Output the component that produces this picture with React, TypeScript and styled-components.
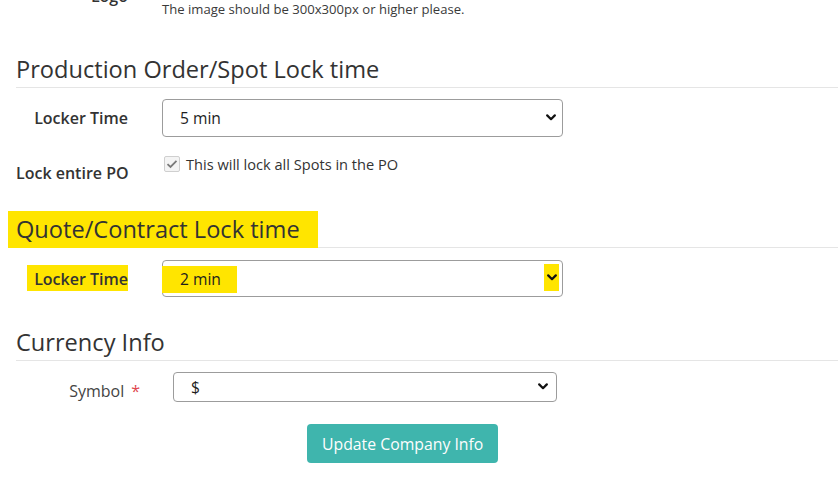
import React from "react";
import styled, { createGlobalStyle } from "styled-components";

const GlobalStyle = createGlobalStyle`
  html, body { margin: 0; padding: 0; background: #fff; }
  body { font-family: "Open Sans", "Liberation Sans", sans-serif; color: #333; overflow: hidden; }
`;

const Page = styled.div`
  padding-left: 16px;
`;

const FormRow = styled.div<{ $cols: string; $gap: number; $mt: number; $align?: string }>`
  display: grid;
  grid-template-columns: ${(p) => p.$cols};
  column-gap: ${(p) => p.$gap}px;
  margin-top: ${(p) => p.$mt}px;
  align-items: ${(p) => p.$align || "center"};
`;

const Label = styled.label<{ $mt?: number; $weight?: number; $color?: string }>`
  display: block;
  text-align: right;
  font-size: 16px;
  line-height: 22px;
  font-weight: ${(p) => p.$weight ?? 600};
  color: ${(p) => p.$color || "#333"};
  margin-top: ${(p) => p.$mt ?? 0}px;
  white-space: nowrap;
`;

const HelpText = styled.div`
  font-size: 13.1px;
  line-height: 18px;
  color: #3a3a3a;
`;

const SectionTitle = styled.h3<{ $mt: number }>`
  margin: ${(p) => p.$mt}px 0 0 0;
  font-size: 23.6px;
  font-weight: 400;
  line-height: 26px;
  color: #333;
  padding-bottom: 5px;
  border-bottom: 1px solid #e5e5e5;
`;

const Marker = styled.span<{ $pad: string; $margin: string }>`
  background: #ffe500;
  padding: ${(p) => p.$pad};
  margin: ${(p) => p.$margin};
`;

const SelectBox = styled.div<{ $h: number }>`
  display: flex;
  align-items: center;
  justify-content: space-between;
  height: ${(p) => p.$h}px;
  box-sizing: border-box;
  border: 1px solid #9c9c9c;
  border-radius: 4px;
  background: #fff;
  padding-left: 17px;
  padding-right: 2px;
  font-size: 15.6px;
  line-height: 20px;
  color: #1d1d1d;
`;

const ChevronWrap = styled.span<{ $marked?: boolean; $mr: number }>`
  display: flex;
  align-items: center;
  justify-content: center;
  width: 15px;
  height: 27px;
  margin-right: ${(p) => p.$mr}px;
  margin-top: -2px;
  background: ${(p) => (p.$marked ? "#ffe500" : "transparent")};
`;

const CheckLine = styled.div`
  display: flex;
  align-items: center;
  gap: 6px;
  font-size: 14.6px;
  line-height: 22px;
  color: #333;
  padding-left: 2px;
`;

const CheckBox = styled.span`
  display: inline-flex;
  align-items: center;
  justify-content: center;
  width: 16px;
  height: 16px;
  box-sizing: border-box;
  border: 1px solid #cfcfcf;
  border-radius: 2px;
  background: #f4f4f4;
`;

const Required = styled.span`
  color: #e0464e;
  margin-left: 7px;
`;

const SubmitButton = styled.button`
  display: block;
  margin: 22px 0 0 291px;
  height: 39px;
  padding: 0 15px;
  border: none;
  border-radius: 4px;
  background: #3fb5ad;
  color: #fdfdfd;
  font-family: "Open Sans", "Liberation Sans", sans-serif;
  font-size: 15.8px;
  cursor: pointer;
`;

const Chevron = () => (
  <svg width="10" height="7" viewBox="0 0 10 7">
    <path d="M1.2 1.4 L5 5.2 L8.8 1.4" fill="none" stroke="#111" strokeWidth="2.2" strokeLinecap="round" strokeLinejoin="round" />
  </svg>
);

const Check = () => (
  <svg width="12" height="10" viewBox="0 0 12 10">
    <path d="M1.5 5.2 L4.5 8 L10.5 1.8" fill="none" stroke="#7a7a7a" strokeWidth="1.8" />
  </svg>
);

const LOCK_COLS = "112px 401px";
const CUR_COLS = "124px 384px";

export default function App() {
  return (
    <>
      <GlobalStyle />
      <Page>
        <FormRow $cols={LOCK_COLS} $gap={34} $mt={0} $align="start">
          <Label $mt={-15}>Logo</Label>
          <HelpText>The image should be 300x300px or higher please.</HelpText>
        </FormRow>

        <SectionTitle $mt={38}>Production Order/Spot Lock time</SectionTitle>
        <FormRow $cols={LOCK_COLS} $gap={34} $mt={11}>
          <Label>Locker Time</Label>
          <SelectBox $h={38}>
            <span>5 min</span>
            <ChevronWrap $mr={2}>
              <Chevron />
            </ChevronWrap>
          </SelectBox>
        </FormRow>
        <FormRow $cols={LOCK_COLS} $gap={34} $mt={16} $align="start">
          <Label $mt={9}>Lock entire PO</Label>
          <CheckLine>
            <CheckBox>
              <Check />
            </CheckBox>
            <span>This will lock all Spots in the PO</span>
          </CheckLine>
        </FormRow>

        <SectionTitle $mt={32}>
          <Marker $pad="2px 18px 3px 8px" $margin="0 -18px 0 -8px">Quote/Contract Lock time</Marker>
        </SectionTitle>
        <FormRow $cols={LOCK_COLS} $gap={34} $mt={12}>
          <Label>
            <Marker $pad="3px 0 1px 7px" $margin="0 0 0 -7px">Locker Time</Marker>
          </Label>
          <SelectBox $h={37}>
            <span>
              <Marker $pad="2px 16px 3px 18px" $margin="0 -16px 0 -18px">2 min</Marker>
            </span>
            <ChevronWrap $marked $mr={1}>
              <Chevron />
            </ChevronWrap>
          </SelectBox>
        </FormRow>

        <SectionTitle $mt={32}>Currency Info</SectionTitle>
        <FormRow $cols={CUR_COLS} $gap={33} $mt={11} $align="start">
          <Label $weight={400} $color="#444" $mt={8}>
            Symbol<Required>*</Required>
          </Label>
          <SelectBox $h={30}>
            <span>$</span>
            <ChevronWrap $mr={4}>
              <Chevron />
            </ChevronWrap>
          </SelectBox>
        </FormRow>

        <SubmitButton type="button">Update Company Info</SubmitButton>
      </Page>
    </>
  );
}
